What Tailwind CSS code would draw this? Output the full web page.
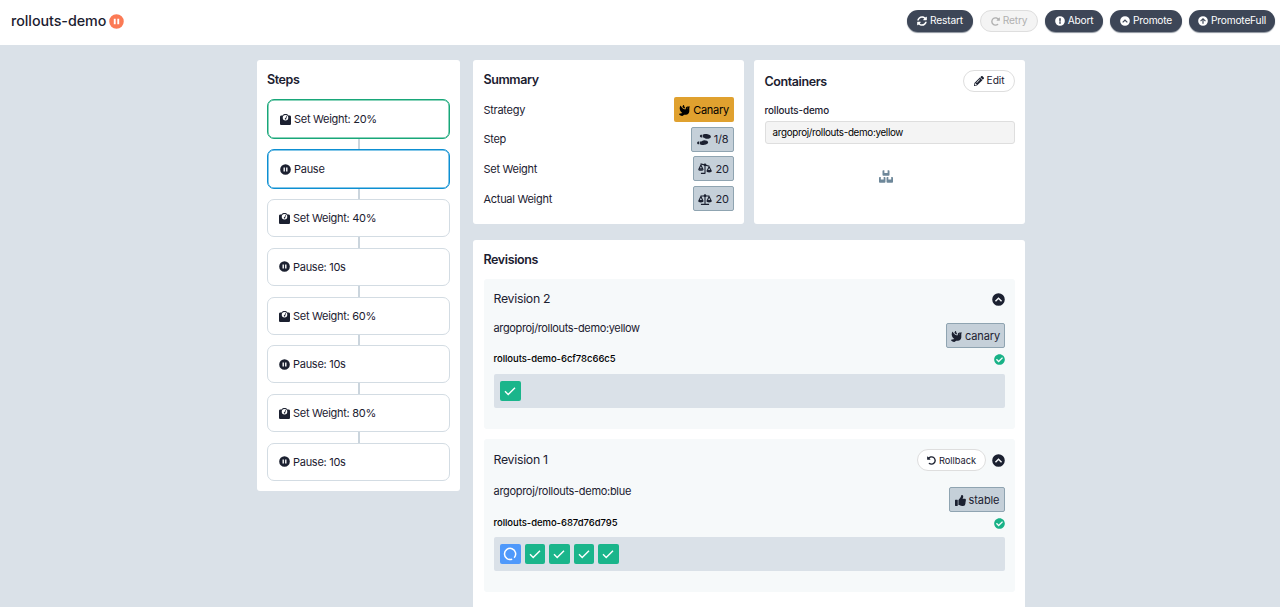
<!DOCTYPE html>
<html lang="en">
<head>
    <meta charset="UTF-8">
    <meta name="viewport" content="width=device-width, initial-scale=1.0">
    <title>rollouts-demo</title>
    <script src="https://cdn.jsdelivr.net/npm/@tailwindcss/browser@4"></script>
</head>
<body class="h-screen overflow-hidden bg-[#dae1e8] font-[Inter,sans-serif] text-[11px] tracking-[-0.28px] text-[#1b2030]">
    <!-- Icon set -->
    <svg class="hidden">
        <symbol id="i-sync" viewBox="0 0 512 512"><path d="M370.72 133.28C339.458 104.008 298.888 87.962 255.848 88c-77.458.068-144.328 53.178-162.791 126.85-1.344 5.363-6.122 9.15-11.651 9.15H24.103c-7.498 0-13.194-6.807-11.807-14.176C33.933 94.924 134.813 8 256 8c66.448 0 126.791 26.136 171.315 68.685L463.03 40.97C478.149 25.851 504 36.559 504 57.941V192c0 13.255-10.745 24-24 24H345.941c-21.382 0-32.09-25.851-16.971-40.971l41.75-41.749zM32 296h134.059c21.382 0 32.09 25.851 16.971 40.971l-41.75 41.75c31.262 29.273 71.835 45.319 114.876 45.28 77.418-.07 144.315-53.144 162.787-126.849 1.344-5.363 6.122-9.15 11.651-9.15h57.304c7.498 0 13.194 6.807 11.807 14.176C478.067 417.076 377.187 504 256 504c-66.448 0-126.791-26.136-171.315-68.685L48.97 471.03C33.851 486.149 8 475.441 8 454.059V320c0-13.255 10.745-24 24-24z"/></symbol>
        <symbol id="i-redo" viewBox="0 0 512 512"><path d="M256.455 8c66.269.119 126.437 26.233 170.859 68.685l35.715-35.715C478.149 25.851 504 36.559 504 57.941V192c0 13.255-10.745 24-24 24H345.941c-21.382 0-32.09-25.851-16.971-40.971l41.75-41.75c-30.864-28.899-70.801-44.907-113.23-45.273-92.398-.798-170.283 73.977-169.484 169.442C88.764 348.009 162.184 424 256 424c41.127 0 79.997-14.678 110.629-41.556 4.743-4.161 11.906-3.908 16.368.553l39.662 39.662c4.872 4.872 4.631 12.815-.482 17.433C378.202 479.813 319.926 504 256 504 119.034 504 8.001 392.967 8 256.002 7.999 119.193 119.646 7.755 256.455 8z"/></symbol>
        <symbol id="i-exclaim" viewBox="0 0 512 512"><path fill-rule="evenodd" d="M256 8a248 248 0 1 0 0 496a248 248 0 1 0 0-496zM212 114h88l-12 176h-64zM256 312a44 44 0 1 1 0 88a44 44 0 1 1 0-88z"/></symbol>
        <symbol id="i-chevron" viewBox="0 0 512 512"><path fill-rule="evenodd" d="M256 8a248 248 0 1 0 0 496a248 248 0 1 0 0-496zM256 168l140 140-40 40-100-98-100 98-40-40z"/></symbol>
        <symbol id="i-arrow" viewBox="0 0 512 512"><path fill-rule="evenodd" d="M256 8a248 248 0 1 0 0 496a248 248 0 1 0 0-496zM256 104l144 144-38 38-76-76v190h-60V210l-76 76-38-38z"/></symbol>
        <symbol id="i-pause" viewBox="0 0 512 512"><path fill-rule="evenodd" d="M256 8a248 248 0 1 0 0 496a248 248 0 1 0 0-496zM164 160h64v192h-64zM284 160h64v192h-64z"/></symbol>
        <symbol id="i-weight" viewBox="0 0 512 512"><path fill-rule="evenodd" d="M392 64C360 25 311 0 256 0S152 25 120 64H64C29 64 0 93 0 128v320c0 35 29 64 64 64h384c35 0 64-29 64-64V128c0-35-29-64-64-64zM256 48a128 128 0 1 1 0 256a128 128 0 1 1 0-256zM300 98l32 16-42 88a36 36 0 1 1-32-16z"/></symbol>
        <symbol id="i-dove" viewBox="0 0 512 512"><path d="M288 167.2v-28.1c-28.2-36.3-47.1-79.3-54.1-125.2-2.1-13.5-19-18.8-27.8-8.3-21.1 24.9-37.7 54.1-48.9 86.5 34.2 38.3 80 64.6 130.8 75.1zM400 64c-44.2 0-80 35.9-80 80.1v59.4C215.6 197.3 127 133 87 41.8c-5.5-12.5-23.2-13.2-29-.9C41.4 76 32 115.2 32 156.6c0 70.8 34.1 136.9 85.1 185.9 13.2 12.7 26.1 23.2 38.9 32.8l-143.9 36C1.2 414-3.4 426.4 2.6 435.7 20 462.6 63 508.2 155.8 512c8 .3 16-2.6 22.1-7.9l65.2-56.1H320c88.4 0 160-71.5 160-159.9V128l32-64H400zm0 96.1c-8.8 0-16-7.2-16-16s7.2-16 16-16 16 7.2 16 16-7.2 16-16 16z"/></symbol>
        <symbol id="i-shoes" viewBox="0 0 640 512"><path d="M192 160h32V32h-32c-35.35 0-64 28.65-64 64s28.65 64 64 64zM0 416c0 35.35 28.65 64 64 64h32V352H64c-35.35 0-64 28.65-64 64zm337.46-128c-34.91 0-76.16 13.12-104.73 32-24.79 16.38-44.52 32-104.73 32v128l57.53 15.97c26.21 7.28 53.01 13.12 80.31 15.05 32.69 2.31 65.6.67 97.58-6.2C472.9 481.3 512 429.22 512 384c0-64-84.18-96-174.54-96zM491.42 7.19C459.44.32 426.53-1.33 393.84.99c-27.3 1.93-54.1 7.77-80.31 15.04L256 32v128c60.2 0 79.94 15.62 104.73 32 28.57 18.88 69.82 32 104.73 32C555.82 224 640 192 640 128c0-45.22-39.1-97.3-148.58-120.81z"/></symbol>
        <symbol id="i-balance" viewBox="0 0 640 512"><g fill="none" stroke="currentColor" stroke-width="52" stroke-linejoin="round"><path d="M112 90h416M320 10v468M130 482h380M128 120L40 300h176zM512 120L424 300h176z"/></g><path d="M0 310h256c0 44-57 80-128 80S0 354 0 310zM384 310h256c0 44-57 80-128 80s-128-36-128-80z"/><circle cx="320" cy="80" r="62"/></symbol>
        <symbol id="i-balance-tilt" viewBox="0 0 640 512"><g fill="none" stroke="currentColor" stroke-width="52" stroke-linejoin="round"><path d="M112 42l416 106M320 80v402h-190M128 90L40 276h176zM512 170L424 350h176z"/></g><path d="M0 286h256c0 44-57 80-128 80S0 330 0 286zM384 360h256c0 44-57 80-128 80s-128-36-128-80z"/><circle cx="320" cy="84" r="62"/></symbol>
        <symbol id="i-pencil" viewBox="0 0 512 512"><path fill-rule="evenodd" d="M498 142l-46 46-128-128 46-46c19-19 49-19 68 0l60 60c19 19 19 49 0 68zM301 83L22 362 0 484c-3 17 11 31 28 28l122-21 279-279zM121 329l159-160 24 24-159 160zM88 424h48v36l-65 12-31-31 12-65h36z"/></symbol>
        <symbol id="i-boxes" viewBox="0 0 576 512"><path d="M176 0h46v108h132V0h46c18 0 32 14 32 32v160c0 18-14 32-32 32H176c-18 0-32-14-32-32V32c0-18 14-32 32-32zM32 272h42v104h118V272h42c18 0 32 14 32 32v176c0 18-14 32-32 32H32c-18 0-32-14-32-32V304c0-18 14-32 32-32zM342 272h42v104h118V272h42c18 0 32 14 32 32v176c0 18-14 32-32 32H342c-18 0-32-14-32-32V304c0-18 14-32 32-32z"/></symbol>
        <symbol id="i-check-circle" viewBox="0 0 512 512"><path d="M504 256c0 136.967-111.033 248-248 248S8 392.967 8 256 119.033 8 256 8s248 111.033 248 248zM227.314 387.314l184-184c6.248-6.248 6.248-16.379 0-22.627l-22.627-22.627c-6.248-6.249-16.379-6.249-22.628 0L216 308.118l-70.059-70.059c-6.248-6.248-16.379-6.248-22.628 0l-22.627 22.627c-6.248 6.248-6.248 16.379 0 22.627l104 104c6.249 6.249 16.379 6.249 22.628.001z"/></symbol>
        <symbol id="i-thumb" viewBox="0 0 512 512"><path d="M104 224H24c-13.255 0-24 10.745-24 24v240c0 13.255 10.745 24 24 24h80c13.255 0 24-10.745 24-24V248c0-13.255-10.745-24-24-24zM384 81.452c0 42.416-25.97 66.208-33.277 94.548h101.723c33.397 0 59.397 27.746 59.553 58.098.084 17.938-7.546 37.249-19.439 49.197l-.11.11c9.836 23.337 8.237 56.037-9.308 79.469 8.681 25.895-.069 57.704-16.382 74.757 4.298 17.598 2.244 32.575-6.148 44.632C440.202 511.587 389.616 512 346.839 512l-2.845-.001c-48.287-.017-87.806-17.598-119.56-31.725-15.957-7.099-36.821-15.887-52.651-16.178-6.54-.12-11.783-5.457-11.783-11.998v-213.77c0-3.2 1.282-6.271 3.558-8.521 39.614-39.144 56.648-80.587 89.117-113.111 14.804-14.832 20.188-37.236 25.393-58.902C282.515 39.293 291.817 0 312 0c24 0 72 8 72 81.452z"/></symbol>
        <symbol id="i-check" viewBox="0 0 12 12"><path d="M1 6.3l3.2 3.2L11 2.7" fill="none" stroke="currentColor" stroke-width="1.4"/></symbol>
        <symbol id="i-spinner" viewBox="0 0 14 14"><path d="M9.2 12.1A5.6 5.6 0 1 1 11.2 10.7" fill="none" stroke="currentColor" stroke-width="1.5"/></symbol>
    </svg>

    <header class="flex h-[45px] items-start justify-between bg-white pt-[10px] pr-[5px] pl-[11px]">
        <h1 class="flex items-center gap-[3px] text-[14.3px] leading-[22px] font-medium tracking-[-0.05px]">
            rollouts-demo
            <svg class="size-[15px] fill-[#fb7a55]"><use href="#i-pause"/></svg>
        </h1>
        <div class="flex gap-[7px] text-[10.2px] tracking-[-0.2px] text-white">
            <button class="flex h-[22px] w-[66px] items-center justify-center gap-[3px] rounded-full bg-[#3d4657] shadow-[0_1px_1px_#8b929c]"><svg class="size-[10px] fill-current"><use href="#i-sync"/></svg>Restart</button>
            <button class="flex h-[22px] w-[58px] items-center justify-center gap-[3px] rounded-full border border-[#dedede] bg-[#f4f4f4] text-[#b0b0b0]"><svg class="size-[9px] fill-current"><use href="#i-redo"/></svg>Retry</button>
            <button class="flex h-[22px] w-[58px] items-center justify-center gap-[3px] rounded-full bg-[#3d4657] shadow-[0_1px_1px_#8b929c]"><svg class="size-[10px] fill-current"><use href="#i-exclaim"/></svg>Abort</button>
            <button class="flex h-[22px] w-[72px] items-center justify-center gap-[3px] rounded-full bg-[#3d4657] shadow-[0_1px_1px_#8b929c]"><svg class="size-[10px] fill-current"><use href="#i-chevron"/></svg>Promote</button>
            <button class="flex h-[22px] w-[86px] items-center justify-center gap-[3px] rounded-full bg-[#3d4657] shadow-[0_1px_1px_#8b929c]"><svg class="size-[10px] fill-current"><use href="#i-arrow"/></svg>PromoteFull</button>
        </div>
    </header>

    <main class="flex items-start justify-center gap-[13px] pt-[15px] pl-[2px]">
        <!-- Steps -->
        <section class="flex h-[431px] w-[203px] flex-col rounded-[3px] bg-white px-[10px] pt-[10px]">
            <h2 class="mb-[9px] text-[12.5px] leading-5 font-semibold tracking-[-0.4px]">Steps</h2>
            <div class="flex flex-col items-center">
                <div class="flex h-[40px] w-full shrink-0 items-center gap-[3px] rounded-[7px] border-[1.5px] border-[#18a779] pl-[12px] shadow-[inset_0_0_0_0.5px_#18a779]"><svg class="size-[11px] fill-current"><use href="#i-weight"/></svg>Set Weight: 20%</div>
                <div class="h-[10px] w-[2px] bg-[#cbd5dd]"></div>
                <div class="flex h-[40px] w-full items-center gap-[3px] rounded-[7px] border-[1.5px] border-[#0d8fd2] pl-[12px] shadow-[inset_0_0_0_0.5px_#0d8fd2]"><svg class="size-[11px] fill-current"><use href="#i-pause"/></svg>Pause</div>
                <div class="h-[10px] w-[2px] bg-[#cbd5dd]"></div>
                <div class="flex h-[38px] w-full items-center gap-[3px] rounded-[7px] border border-[#d3dce3] pl-[11px]"><svg class="size-[11px] fill-current"><use href="#i-weight"/></svg>Set Weight: 40%</div>
                <div class="h-[10.75px] w-[2px] bg-[#cbd5dd]"></div>
                <div class="flex h-[38px] w-full items-center gap-[3px] rounded-[7px] border border-[#d3dce3] pl-[11px]"><svg class="size-[11px] fill-current"><use href="#i-pause"/></svg>Pause: 10s</div>
                <div class="h-[10.75px] w-[2px] bg-[#cbd5dd]"></div>
                <div class="flex h-[38px] w-full items-center gap-[3px] rounded-[7px] border border-[#d3dce3] pt-px pl-[11px]"><svg class="size-[11px] fill-current"><use href="#i-weight"/></svg>Set Weight: 60%</div>
                <div class="h-[10.75px] w-[2px] bg-[#cbd5dd]"></div>
                <div class="flex h-[38px] w-full items-center gap-[3px] rounded-[7px] border border-[#d3dce3] pl-[11px]"><svg class="size-[11px] fill-current"><use href="#i-pause"/></svg>Pause: 10s</div>
                <div class="h-[10.75px] w-[2px] bg-[#cbd5dd]"></div>
                <div class="flex h-[38px] w-full items-center gap-[3px] rounded-[7px] border border-[#d3dce3] pl-[11px]"><svg class="size-[11px] fill-current"><use href="#i-weight"/></svg>Set Weight: 80%</div>
                <div class="h-[10.75px] w-[2px] bg-[#cbd5dd]"></div>
                <div class="flex h-[38px] w-full items-center gap-[3px] rounded-[7px] border border-[#d3dce3] pl-[11px]"><svg class="size-[11px] fill-current"><use href="#i-pause"/></svg>Pause: 10s</div>
            </div>
        </section>

        <div class="w-[552px]">
            <div class="mb-4 flex gap-[10px]">
                <!-- Summary -->
                <section class="h-[164px] w-[271px] rounded-[3px] bg-white pt-[10px] pr-[10px] pl-[10.5px]">
                    <h2 class="mb-[7px] text-[12.5px] leading-5 font-semibold tracking-[-0.4px]">Summary</h2>
                    <div class="flex flex-col gap-[4.7px]">
                        <div class="flex h-[25px] items-center justify-between"><span class="pt-px">Strategy</span>
                            <span class="flex h-[25px] w-[60px] items-center justify-center gap-[3px] rounded-[2px] bg-[#e0a12f] pt-px text-black"><svg class="size-[11px] fill-current"><use href="#i-dove"/></svg>Canary</span>
                        </div>
                        <div class="flex h-[25px] items-center justify-between"><span>Step</span>
                            <span class="flex h-[25px] w-[43px] items-center justify-center gap-[3px] rounded-[2px] border border-[#8fa4b1] bg-[#c5d0d9]"><svg class="h-[11px] w-[14px] fill-current"><use href="#i-shoes"/></svg>1/8</span>
                        </div>
                        <div class="flex h-[25px] items-center justify-between"><span>Set Weight</span>
                            <span class="flex h-[25px] w-[41px] items-center justify-center gap-[3px] rounded-[2px] border border-[#8fa4b1] bg-[#c5d0d9]"><svg class="h-[11px] w-[14px] fill-current"><use href="#i-balance-tilt"/></svg>20</span>
                        </div>
                        <div class="flex h-[25px] items-center justify-between"><span class="pt-px">Actual Weight</span>
                            <span class="flex h-[25px] w-[41px] items-center justify-center gap-[3px] rounded-[2px] border border-[#8fa4b1] bg-[#c5d0d9] pt-px"><svg class="h-[11px] w-[14px] fill-current"><use href="#i-balance"/></svg>20</span>
                        </div>
                    </div>
                </section>

                <!-- Containers -->
                <section class="h-[164px] w-[271px] rounded-[3px] bg-white pt-[10px] pr-[10px] pl-[10.5px]">
                    <div class="flex h-[22px] items-center justify-between">
                        <h2 class="pt-[2px] text-[12.5px] font-semibold tracking-[-0.4px]">Containers</h2>
                        <button class="flex h-[22px] w-[52px] items-center justify-center gap-[3px] rounded-full border border-[#dedede] text-[10.2px] tracking-[-0.1px]"><svg class="size-[10px] fill-current"><use href="#i-pencil"/></svg>Edit</button>
                    </div>
                    <h3 class="mt-[11px] text-[9.8px] leading-[15px] font-medium tracking-[-0.1px]">rollouts-demo</h3>
                    <div class="mt-[3px] flex h-[23px] items-center rounded-[3px] border border-[#dedede] bg-[#f4f4f4] pt-px pl-[7px] text-[9.8px] tracking-[-0.3px] text-black">argoproj/rollouts-demo:yellow</div>
                    <svg class="mx-auto mt-[26px] h-[13px] w-[14px] translate-x-[-4px] fill-[#6d8799]"><use href="#i-boxes"/></svg>
                </section>
            </div>

            <!-- Revisions -->
            <section class="h-[367px] overflow-hidden rounded-t-[3px] bg-white pt-[10px] pr-[10px] pl-[10.5px]">
                <h2 class="mb-[9px] text-[12.5px] leading-5 font-semibold tracking-[-0.4px]">Revisions</h2>

                <div class="mb-[10px] h-[150px] rounded-[3px] bg-[#f6f9fa] px-[10px] pt-[9px]">
                    <div class="flex h-[22px] items-center justify-between text-[12.3px]">Revision 2
                        <svg class="size-[13px] fill-current"><use href="#i-chevron"/></svg>
                    </div>
                    <div class="mt-[10px] leading-4 tracking-[-0.35px]">argoproj/rollouts-demo:yellow</div>
                    <div class="mt-[-13px] flex justify-end">
                        <span class="flex h-[25px] w-[59px] items-center justify-center gap-[3px] rounded-[2px] border border-[#8fa4b1] bg-[#c5d0d9] pt-px tracking-[-0.1px]"><svg class="size-[11px] fill-current"><use href="#i-dove"/></svg>canary</span>
                    </div>
                    <div class="mt-[4px] flex h-[14px] items-center justify-between text-[9.5px] font-medium tracking-[-0.05px] text-black"><span class="pt-px">rollouts-demo-6cf78c66c5</span>
                        <svg class="size-[11px] fill-[#18b287]"><use href="#i-check-circle"/></svg>
                    </div>
                    <div class="mt-[8px] flex h-[34px] items-center gap-[4px] rounded-[2px] bg-[#dae1e8] px-[6.5px]">
                        <div class="flex size-[20.5px] items-center justify-center rounded-[2px] bg-[#1ab58b] text-white"><svg class="size-[12px]"><use href="#i-check"/></svg></div>
                    </div>
                </div>

                <div class="h-[153px] rounded-[3px] bg-[#f6f9fa] px-[10px] pt-[10px]">
                    <div class="flex h-[22px] items-center text-[12.3px]">
                        <span class="flex-1 pt-px">Revision 1</span>
                        <button class="mr-[6px] flex h-[22px] w-[69px] items-center justify-center gap-[3px] rounded-full border border-[#dedede] bg-white pt-px text-[9.3px] tracking-[-0.05px]"><svg class="size-[9px] -scale-x-100 fill-current"><use href="#i-redo"/></svg>Rollback</button>
                        <svg class="size-[13px] fill-current"><use href="#i-chevron"/></svg>
                    </div>
                    <div class="mt-[12px] leading-4 tracking-[-0.3px]">argoproj/rollouts-demo:blue</div>
                    <div class="mt-[-12px] flex justify-end">
                        <span class="flex h-[25px] w-[56px] items-center justify-center gap-[3px] rounded-[2px] border border-[#8fa4b1] bg-[#c5d0d9] pt-px tracking-[-0.1px]"><svg class="size-[11px] fill-current"><use href="#i-thumb"/></svg>stable</span>
                    </div>
                    <div class="mt-[4px] flex h-[14px] items-center justify-between text-[9.5px] font-medium tracking-[-0.05px] text-black"><span class="pt-px">rollouts-demo-687d76d795</span>
                        <svg class="size-[11px] fill-[#18b287]"><use href="#i-check-circle"/></svg>
                    </div>
                    <div class="mt-[7px] flex h-[34px] items-center gap-[4px] rounded-[2px] bg-[#dae1e8] px-[6.5px] text-white">
                        <div class="flex size-[20.5px] items-center justify-center rounded-[2px] bg-[#4f99fb]"><svg class="size-[14px]"><use href="#i-spinner"/></svg></div>
                        <div class="flex size-[20.5px] items-center justify-center rounded-[2px] bg-[#1ab58b]"><svg class="size-[12px]"><use href="#i-check"/></svg></div>
                        <div class="flex size-[20.5px] items-center justify-center rounded-[2px] bg-[#1ab58b]"><svg class="size-[12px]"><use href="#i-check"/></svg></div>
                        <div class="flex size-[20.5px] items-center justify-center rounded-[2px] bg-[#1ab58b]"><svg class="size-[12px]"><use href="#i-check"/></svg></div>
                        <div class="flex size-[20.5px] items-center justify-center rounded-[2px] bg-[#1ab58b]"><svg class="size-[12px]"><use href="#i-check"/></svg></div>
                    </div>
                </div>
            </section>
        </div>
    </main>
</body>
</html>
